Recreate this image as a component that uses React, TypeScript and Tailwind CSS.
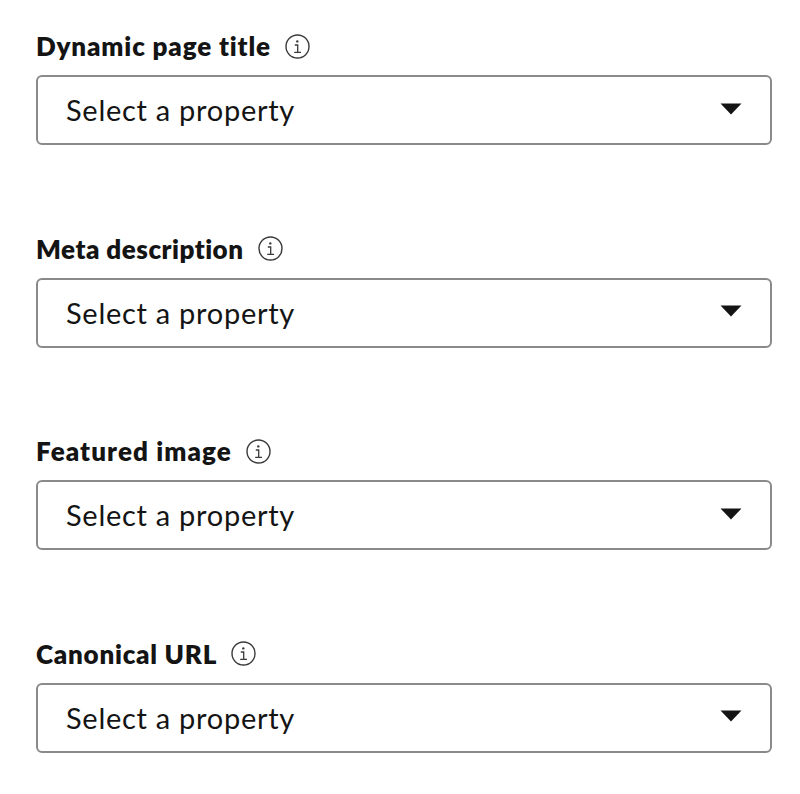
const fields = [
  { label: "Dynamic page title", tracking: "tracking-[0.86px]" },
  { label: "Meta description", tracking: "tracking-[0.5px]" },
  { label: "Featured image", tracking: "tracking-[1.1px]" },
  { label: "Canonical URL", tracking: "tracking-[0.75px]" },
];

function InfoIcon() {
  return (
    <svg width="25" height="25" viewBox="0 0 25 25" fill="none" stroke="#3a3a3a" className="shrink-0">
      <circle cx="12.5" cy="12.5" r="11.5" strokeWidth="1.4" />
      <circle cx="12.3" cy="7.4" r="1.2" fill="#3a3a3a" stroke="none" />
      <path d="M9.8 11h2.9v7.2M9.2 18.4h6.8" strokeWidth="1.3" />
    </svg>
  );
}

function Caret() {
  return (
    <svg width="22" height="12" viewBox="0 0 22 12" className="shrink-0 -mt-[3px]">
      <path d="M0.5 0.5h21L11 11.5z" fill="#141414" />
    </svg>
  );
}

export default function App() {
  return (
    <div className="w-[800px] h-[794px] bg-white pl-[36px] pr-[28px] pt-[33px] flex flex-col gap-[90.67px] font-['Lato','Liberation_Sans',sans-serif] text-[#141414]">
      {fields.map((f) => (
        <div key={f.label} className="flex flex-col gap-[14px]">
          <div className="flex items-center gap-[14px] h-[28px] -translate-y-[1px]">
            <span className={`text-[26px] leading-[28px] font-extrabold ${f.tracking}`}>{f.label}</span>
            <InfoIcon />
          </div>
          <div className="h-[70px] rounded-[6px] border-2 border-[#8a8a8a] pl-[28px] pr-[28px] flex items-center justify-between">
            <span className="text-[29px] leading-[36px] font-normal tracking-[0.72px]">Select a property</span>
            <Caret />
          </div>
        </div>
      ))}
    </div>
  );
}
